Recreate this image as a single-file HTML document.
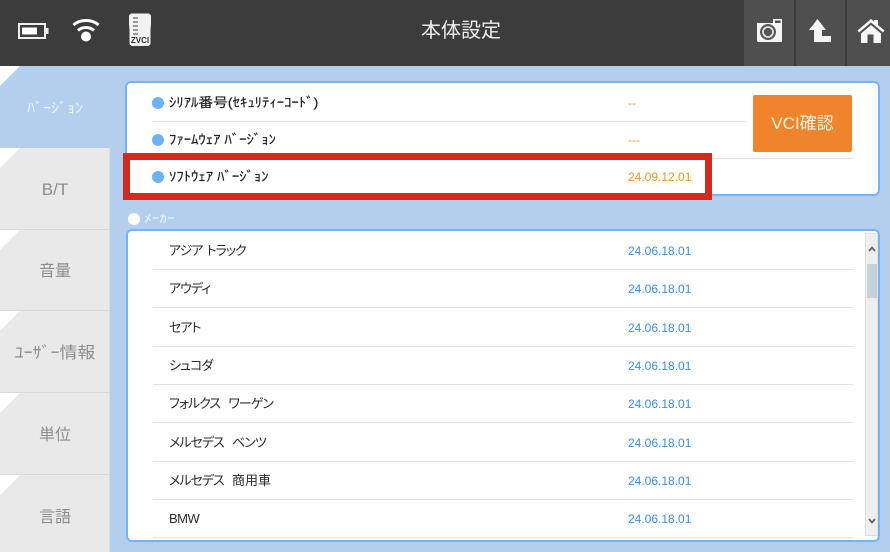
<!DOCTYPE html>
<html lang="ja"><head><meta charset="utf-8">
<style>
html,body{margin:0;padding:0}
body{width:890px;height:552px;overflow:hidden;position:relative;background:#b4cfee;font-family:"Liberation Sans","Noto Sans CJK JP",sans-serif}
div,span,svg{position:absolute;box-sizing:border-box}
.t{white-space:pre;line-height:16px}
.hdr{left:0;top:0;width:890px;height:66px;background:#3c3c3c}
.btn{top:0;height:66px;background:#4f4f4f}
.tab{left:0;width:110px;height:82px;background:#e9e9e9;border-bottom:1px solid #d9d9d9;border-right:1px solid #dedede}
.tl{left:0;width:110px;color:#8c8c8c;font-size:16px;text-align:center;line-height:20px;white-space:nowrap}
.tri{left:0;width:0;height:0;border-top:20px solid #fff;border-right:20px solid transparent}
.panel{background:#fff;border:2px solid #74b3f8;border-radius:6px}
.ln{height:1px;background:#e2e2e2}
.dot{width:12px;height:12px;border-radius:50%;background:#6fb1f8;left:152px}
.k{left:169px;font-size:13px;color:#222;-webkit-text-stroke:.2px #222;transform:scaleX(1.13);transform-origin:left center}
.n{left:169px;font-size:13px;color:#2a2a2a;font-feature-settings:"palt";letter-spacing:-1px;word-spacing:1.5px}
.n b{font-weight:400;letter-spacing:0}
.v{left:628px;font-size:12px;color:#3a8eea}
.o{left:628px;font-size:12px;color:#f0922e}
</style></head><body>
<div class="hdr"></div>
<div class="btn" style="left:744px;width:50px"></div>
<div class="btn" style="left:796px;width:49px"></div>
<div class="btn" style="left:847px;width:43px"></div>
<div class="t" style="left:0;width:922px;top:20px;line-height:22px;text-align:center;color:#eee;font-size:20px">本体設定</div>

<svg style="left:16px;top:22px" width="34" height="18" viewBox="0 0 34 18"><rect x="3" y="2" width="26" height="14" fill="none" stroke="#eee" stroke-width="2"/><rect x="30" y="6" width="2.500" height="6" fill="#eee"/><rect x="6" y="5.500" width="15" height="7" fill="#fff"/></svg>
<svg style="left:70px;top:16px" width="32" height="28" viewBox="0 0 32 28"><path d="M3.500 9C10 3 22 3 28.500 9" fill="none" stroke="#fff" stroke-width="3"/><path d="M8 14.500C12.500 10.500 19.500 10.500 24 14.500" fill="none" stroke="#fff" stroke-width="3"/><circle cx="16" cy="20.500" r="5" fill="#fff"/></svg>
<svg style="left:128px;top:13px" width="24" height="34" viewBox="0 0 24 34"><path d="M3 0.500H21L23 2.500V11L22.500 17V31L20.500 33H3.500L1.500 31V17L1 11V2.500Z" fill="#f2f2f2"/><g fill="#999"><rect x="5" y="4" width="5" height="2"/><rect x="5" y="8" width="5" height="2"/><rect x="5" y="12" width="5" height="2"/><rect x="5" y="16" width="5" height="2"/><rect x="5" y="20" width="5" height="2"/></g><text x="12" y="30" font-family="Liberation Sans" font-weight="bold" font-size="8" fill="#333" text-anchor="middle">ZVCI</text></svg>

<svg style="left:756px;top:18px" width="27" height="26" viewBox="0 0 27 26"><path d="M1 5H17V1H26V24H2L1 23Z" fill="#f4f4f4"/><rect x="19" y="2.500" width="5.500" height="2.500" fill="#4f4f4f"/><circle cx="12" cy="14" r="8" fill="#555"/><circle cx="12" cy="14" r="5.800" fill="#f4f4f4"/><circle cx="12" cy="14" r="4.300" fill="#555"/></svg>
<svg style="left:808px;top:18px" width="24" height="26" viewBox="0 0 24 26"><path d="M9.500 1L18 12H14V18H23V24H6V12H1Z" fill="#f6f6f6"/></svg>
<svg style="left:857px;top:18px" width="28" height="26" viewBox="0 0 28 26"><path d="M0.500 12.500L14 1L17 3.500V2H21V7L27.500 12.500L26 14.500L14 4.500L2 14.500Z" fill="#f6f6f6"/><path d="M4 15.500L14 7L24 15.500V25H16.500V16.500H10.500V25H4Z" fill="#f6f6f6"/></svg>

<div class="tri" style="top:66px"></div>
<div class="t" style="left:0;width:110px;top:100px;text-align:center;color:#f2f6fb;font-size:14px;transform:scaleX(1.14)">ﾊﾞｰｼﾞｮﾝ</div>
<div class="tab" style="top:148px"></div><div class="tl" style="top:180px;font-size:17px">B/T</div><div class="tri" style="top:148px"></div>
<div class="tab" style="top:230px;height:81px"></div><div class="tl" style="top:262px">音量</div><div class="tri" style="top:230px"></div>
<div class="tab" style="top:311px"></div><div class="tl" style="top:344px;transform:scaleX(1.12)">ﾕｰｻﾞｰ情報</div><div class="tri" style="top:311px"></div>
<div class="tab" style="top:393px"></div><div class="tl" style="top:426px">単位</div><div class="tri" style="top:393px"></div>
<div class="tab" style="top:475px;height:77px;border-bottom:0"></div><div class="tl" style="top:508px">言語</div><div class="tri" style="top:475px"></div>

<div class="panel" style="left:125px;top:81px;width:755px;height:115px"></div>
<div class="dot" style="top:97px"></div><div class="t k" style="top:95px">ｼﾘｱﾙ番号(ｾｷｭﾘﾃｨｰｺｰﾄﾞ)</div><div class="t o" style="top:95px">--</div>
<div class="ln" style="left:153px;top:121px;width:593px"></div>
<div class="dot" style="top:134px"></div><div class="t k" style="top:132px">ﾌｧｰﾑｳｪｱ ﾊﾞｰｼﾞｮﾝ</div><div class="t o" style="top:132px">---</div>
<div class="ln" style="left:153px;top:158px;width:700px"></div>
<div class="dot" style="top:171px"></div><div class="t k" style="top:169px">ｿﾌﾄｳｪｱ ﾊﾞｰｼﾞｮﾝ</div><div class="t o" style="top:169px">24.09.12.01</div>
<div class="t" style="left:753px;top:95px;width:99px;height:57px;background:#f0842a;border-radius:2px;color:#fdf3e8;font-size:17px;line-height:57px;text-align:center">VCI確認</div>
<div style="left:123px;top:153px;width:589px;height:47px;border:7px solid #d02b1e"></div>

<div style="left:128px;top:213px;width:12px;height:12px;border-radius:50%;background:#fff"></div>
<div class="t" style="left:144px;top:211px;font-size:11px;color:#f3f7fc;transform:scaleX(1.4);transform-origin:left center">ﾒｰｶｰ</div>

<div class="panel" style="left:126px;top:229px;width:754px;height:313px"></div>
<div style="left:865px;top:233px;width:13px;height:303px;background:#efefef;border:1px solid #e0e0e0"></div>
<div style="left:867px;top:264px;width:10px;height:34px;background:#c3d1da"></div>
<svg style="left:867px;top:245px" width="10" height="8" viewBox="0 0 10 8"><path d="M2 6L5 2.500L8 6" fill="none" stroke="#666" stroke-width="1.800"/></svg>
<svg style="left:867px;top:517px" width="10" height="8" viewBox="0 0 10 8"><path d="M2 2L5 5.500L8 2" fill="none" stroke="#666" stroke-width="1.800"/></svg>

<div class="t n" style="top:243px">アジア トラック</div><div class="t v" style="top:243px">24.06.18.01</div>
<div class="ln" style="left:153px;top:269px;width:700px"></div>
<div class="t n" style="top:281px">アウディ</div><div class="t v" style="top:281px">24.06.18.01</div>
<div class="ln" style="left:153px;top:307px;width:700px"></div>
<div class="t n" style="top:320px">セアト</div><div class="t v" style="top:320px">24.06.18.01</div>
<div class="ln" style="left:153px;top:346px;width:700px"></div>
<div class="t n" style="top:358px">シュコダ</div><div class="t v" style="top:358px">24.06.18.01</div>
<div class="ln" style="left:153px;top:384px;width:700px"></div>
<div class="t n" style="top:396px">フォルクス  ワーゲン</div><div class="t v" style="top:396px">24.06.18.01</div>
<div class="ln" style="left:153px;top:422px;width:700px"></div>
<div class="t n" style="top:435px">メルセデス  ベンツ</div><div class="t v" style="top:435px">24.06.18.01</div>
<div class="ln" style="left:153px;top:461px;width:700px"></div>
<div class="t n" style="top:473px">メルセデス  <b>商用車</b></div><div class="t v" style="top:473px">24.06.18.01</div>
<div class="ln" style="left:153px;top:499px;width:700px"></div>
<div class="t n" style="top:511px;letter-spacing:-.5px">BMW</div><div class="t v" style="top:511px">24.06.18.01</div>
<div class="ln" style="left:153px;top:537px;width:700px"></div>
</body></html>
